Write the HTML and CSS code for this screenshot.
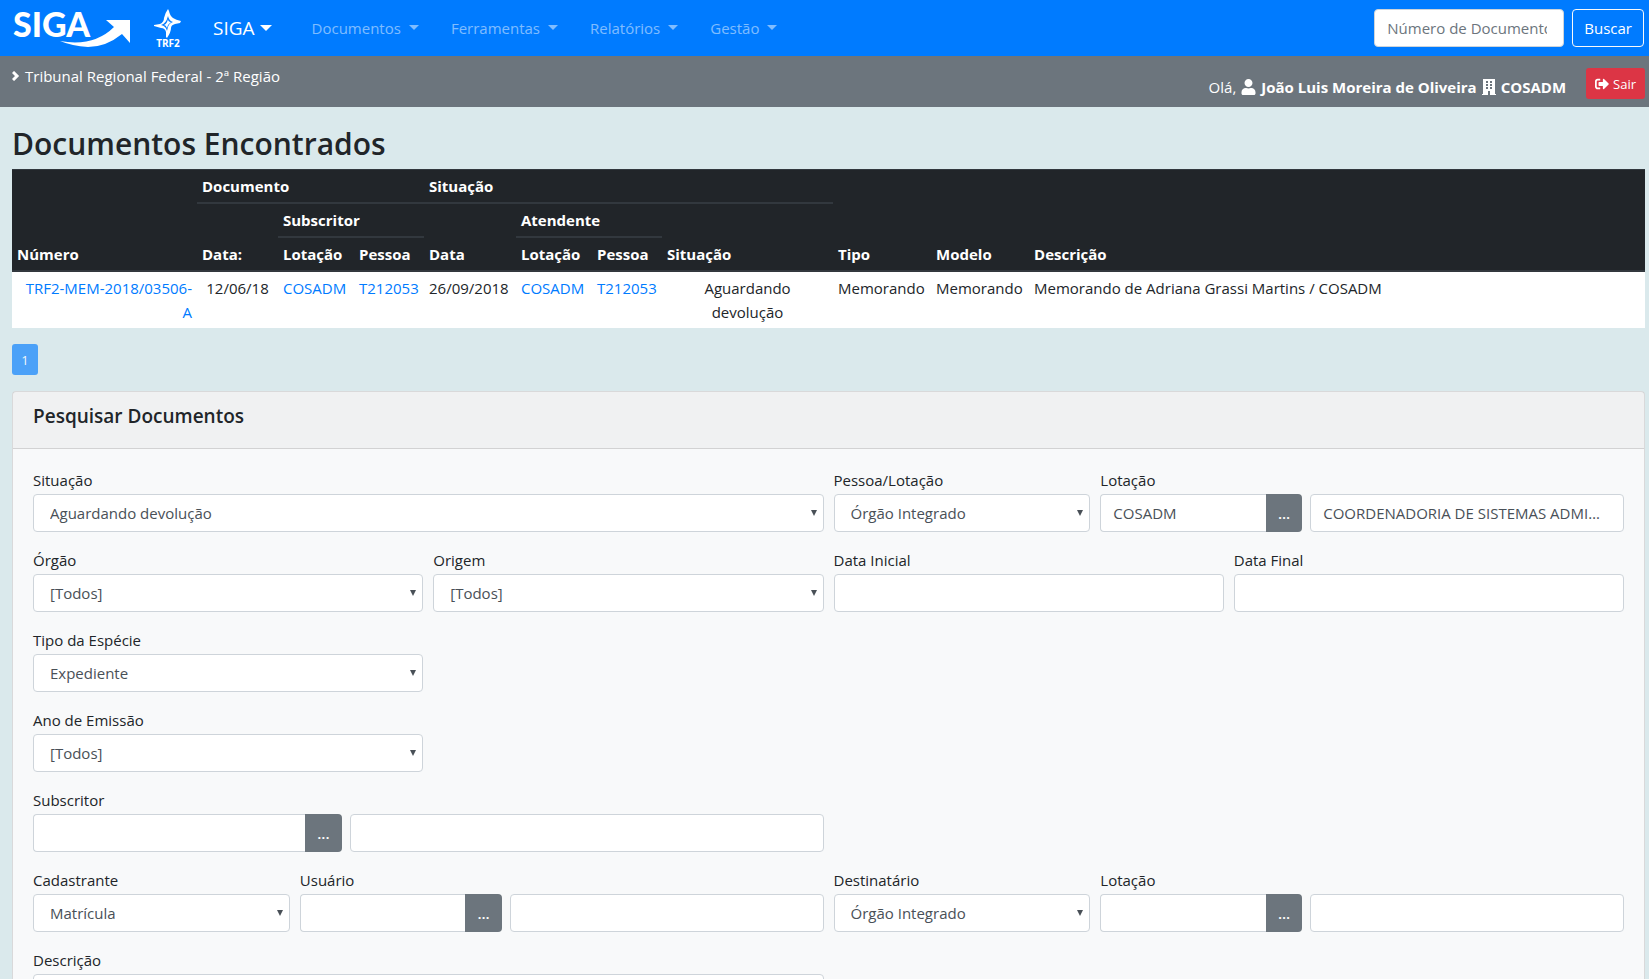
FILE: index.html
```html
<!DOCTYPE html>
<html lang="pt-BR">
<head>
    <meta charset="UTF-8">
    <meta name="viewport" content="width=device-width, initial-scale=1.0">
    <title>SIGA - Lista de Documentos</title>
    <link rel="stylesheet" href="styles.css">
</head>
<body>
    <nav class="navbar">
        <a class="logo" href="#" aria-label="Página inicial">
            <svg width="120" height="56" viewBox="11 0 120 56">
                <text class="logo-text" x="13" y="37">SIGA</text>
                <path fill="#fff" d="M60 41 Q94 47 114 27 L106 20 H130 V43 L122 34 Q106 47 88 47 Q72 46 60 41Z"/>
            </svg>
        </a>
        <a class="logo-trf" href="#" aria-label="TRF2">
            <svg width="30" height="56" viewBox="153 0 30 56">
                <path fill="#fff" d="M168 9 L169 11 Q170 16 173 18 Q176 20 181 21 L180 23 L175 24 Q171 25 171 28 Q171 32 167 38 L166 37 V32 Q165 28 161 28 L154 26 V25 L160 24 Q164 22 164 18 Q165 13 168 9Z"/>
                <path fill="#007bff" d="M168 16 Q169 21 173 22 Q168 23 167 31 Q166 26 161 25 Q166 24 168 16Z"/>
                <path fill="#fff" d="M168 19 Q168 22 171 22 Q168 24 167 28 Q166 25 164 25 Q167 24 168 19Z"/>
                <text class="logo-trf-text" x="168" y="47" text-anchor="middle">TRF2</text>
            </svg>
        </a>
        <a class="brand dropdown" href="#">SIGA</a>
        <ul class="nav">
            <li><a class="dropdown" href="#">Documentos</a></li>
            <li><a class="dropdown" href="#">Ferramentas</a></li>
            <li><a class="dropdown" href="#">Relatórios</a></li>
            <li><a class="dropdown" href="#">Gestão</a></li>
        </ul>
        <form class="search">
            <input class="form-control" type="text" placeholder="Número de Documento" aria-label="Número de Documento">
            <button class="btn btn-outline" type="button">Buscar</button>
        </form>
    </nav>

    <div class="subbar">
        <div class="orgao">
            <svg width="8" height="10" viewBox="0 0 8 10"><path d="M1 1 L5 5 L1 9" fill="none" stroke="#fff" stroke-width="3"/></svg>
            <span>Tribunal Regional Federal - 2ª Região</span>
        </div>
        <div class="usuario">
            <span>Olá,</span>
            <svg width="15" height="16" viewBox="0 0 448 512"><path fill="#fff" d="M224 256c70.700 0 128-57.300 128-128S294.700 0 224 0 96 57.300 96 128s57.300 128 128 128zm89.600 32h-16.700c-22.200 10.200-46.900 16-72.900 16s-50.600-5.800-72.900-16h-16.700C60.200 288 0 348.200 0 422.400V464c0 26.500 21.500 48 48 48h352c26.500 0 48-21.500 48-48v-41.600c0-74.200-60.200-134.400-134.400-134.400z"/></svg>
            <strong>João Luis Moreira de Oliveira</strong>
            <svg width="14" height="16" viewBox="0 0 14 16"><path fill="#fff" fill-rule="evenodd" d="M1 0H13V15H14V16H8V12H6V16H0V15H1ZM4 2V4H6V2ZM8 2V4H10V2ZM4 5V7H6V5ZM8 5V7H10V5ZM4 8V10H6V8ZM8 8V10H10V8Z"/></svg>
            <strong>COSADM</strong>
        </div>
        <button class="btn btn-danger btn-sm" type="button">
            <svg width="14" height="14" viewBox="0 0 512 512"><path fill="#fff" d="M497 273L329 441c-15 15-41 4.500-41-17v-96H152c-13.300 0-24-10.700-24-24v-96c0-13.300 10.700-24 24-24h136V88c0-21.400 25.900-32 41-17l168 168c9.300 9.400 9.300 24.600 0 34zM192 436v-40c0-6.600-5.400-12-12-12H96c-17.700 0-32-14.300-32-32V160c0-17.700 14.300-32 32-32h84c6.600 0 12-5.400 12-12V76c0-6.600-5.400-12-12-12H96c-53 0-96 43-96 96v192c0 53 43 96 96 96h84c6.600 0 12-5.400 12-12z"/></svg>
            Sair
        </button>
    </div>

    <main class="content">
        <h2>Documentos Encontrados</h2>
        <table class="table">
            <colgroup>
                <col class="c-numero">
                <col class="c-data">
                <col class="c-lotacao">
                <col class="c-pessoa">
                <col class="c-data-sit">
                <col class="c-lotacao">
                <col class="c-pessoa">
                <col class="c-situacao">
                <col class="c-tipo">
                <col class="c-tipo">
                <col>
            </colgroup>
            <thead>
                <tr>
                    <th rowspan="3">Número</th>
                    <th colspan="3">Documento</th>
                    <th colspan="4">Situação</th>
                    <th rowspan="3">Tipo</th>
                    <th rowspan="3">Modelo</th>
                    <th rowspan="3">Descrição</th>
                </tr>
                <tr>
                    <th rowspan="2">Data:</th>
                    <th colspan="2">Subscritor</th>
                    <th rowspan="2">Data</th>
                    <th colspan="2">Atendente</th>
                    <th rowspan="2">Situação</th>
                </tr>
                <tr>
                    <th>Lotação</th>
                    <th>Pessoa</th>
                    <th>Lotação</th>
                    <th>Pessoa</th>
                </tr>
            </thead>
            <tbody>
                <tr>
                    <td class="right"><a href="#">TRF2-MEM-2018/03506-A</a></td>
                    <td class="center">12/06/18</td>
                    <td><a href="#">COSADM</a></td>
                    <td><a href="#">T212053</a></td>
                    <td>26/09/2018</td>
                    <td><a href="#">COSADM</a></td>
                    <td><a href="#">T212053</a></td>
                    <td class="center">Aguardando<br>devolução</td>
                    <td>Memorando</td>
                    <td>Memorando</td>
                    <td>Memorando de Adriana Grassi Martins / COSADM</td>
                </tr>
            </tbody>
        </table>

        <button class="btn btn-primary btn-sm" type="button" disabled>1</button>

        <div class="card">
            <div class="card-header"><h5>Pesquisar Documentos</h5></div>
            <form class="card-body">
                <div class="row">
                    <div class="field col-6">
                        <label for="situacao">Situação</label>
                        <div class="select"><select class="form-control" id="situacao"><option>Aguardando devolução</option></select></div>
                    </div>
                    <div class="field col-2">
                        <label for="pessoaLotacao">Pessoa/Lotação</label>
                        <div class="select"><select class="form-control" id="pessoaLotacao"><option>Órgão Integrado</option></select></div>
                    </div>
                    <div class="field col-4">
                        <label for="lotacao">Lotação</label>
                        <div class="lookup">
                            <div class="input-group">
                                <input class="form-control" type="text" id="lotacao" value="COSADM">
                                <button class="btn btn-secondary" type="button">...</button>
                            </div>
                            <input class="form-control" type="text" value="COORDENADORIA DE SISTEMAS ADMINISTRATIVOS" aria-label="Nome da lotação" readonly>
                        </div>
                    </div>
                </div>
                <div class="row">
                    <div class="field col-3">
                        <label for="orgao">Órgão</label>
                        <div class="select"><select class="form-control" id="orgao"><option>[Todos]</option></select></div>
                    </div>
                    <div class="field col-3">
                        <label for="origem">Origem</label>
                        <div class="select"><select class="form-control" id="origem"><option>[Todos]</option></select></div>
                    </div>
                    <div class="field col-3">
                        <label for="dataInicial">Data Inicial</label>
                        <input class="form-control" type="text" id="dataInicial">
                    </div>
                    <div class="field col-3">
                        <label for="dataFinal">Data Final</label>
                        <input class="form-control" type="text" id="dataFinal">
                    </div>
                </div>
                <div class="row">
                    <div class="field col-3">
                        <label for="especie">Tipo da Espécie</label>
                        <div class="select"><select class="form-control" id="especie"><option>Expediente</option></select></div>
                    </div>
                </div>
                <div class="row">
                    <div class="field col-3">
                        <label for="ano">Ano de Emissão</label>
                        <div class="select"><select class="form-control" id="ano"><option>[Todos]</option></select></div>
                    </div>
                </div>
                <div class="row">
                    <div class="field col-6">
                        <label for="subscritor">Subscritor</label>
                        <div class="lookup">
                            <div class="input-group">
                                <input class="form-control" type="text" id="subscritor">
                                <button class="btn btn-secondary" type="button">...</button>
                            </div>
                            <input class="form-control" type="text" aria-label="Nome do subscritor" readonly>
                        </div>
                    </div>
                </div>
                <div class="row">
                    <div class="field col-2">
                        <label for="cadastrante">Cadastrante</label>
                        <div class="select"><select class="form-control" id="cadastrante"><option>Matrícula</option></select></div>
                    </div>
                    <div class="field col-4">
                        <label for="usuario">Usuário</label>
                        <div class="lookup">
                            <div class="input-group">
                                <input class="form-control" type="text" id="usuario">
                                <button class="btn btn-secondary" type="button">...</button>
                            </div>
                            <input class="form-control" type="text" aria-label="Nome do usuário" readonly>
                        </div>
                    </div>
                    <div class="field col-2">
                        <label for="destinatario">Destinatário</label>
                        <div class="select"><select class="form-control" id="destinatario"><option>Órgão Integrado</option></select></div>
                    </div>
                    <div class="field col-4">
                        <label for="lotacaoDest">Lotação</label>
                        <div class="lookup">
                            <div class="input-group">
                                <input class="form-control" type="text" id="lotacaoDest">
                                <button class="btn btn-secondary" type="button">...</button>
                            </div>
                            <input class="form-control" type="text" aria-label="Nome da lotação do destinatário" readonly>
                        </div>
                    </div>
                </div>
                <div class="row">
                    <div class="field col-6">
                        <label for="descricao">Descrição</label>
                        <input class="form-control" type="text" id="descricao">
                    </div>
                </div>
            </form>
        </div>
    </main>
</body>
</html>
```

FILE: styles.css
```css
* {
    box-sizing: border-box;
}
html {
    scrollbar-width: none;
}
body {
    margin: 0;
    background-color: #dae9ec;
    color: #212529;
    font-family: "Open Sans", "Noto Sans", sans-serif;
    font-size: 15px;
    line-height: 24px;
}
a {
    color: #007bff;
    text-decoration: none;
}
svg {
    display: block;
}

/* navbar */
.navbar {
    display: flex;
    align-items: center;
    height: 56px;
    padding: 0 5px 0 11px;
    background-color: #007bff;
}
.logo-text {
    font: 900 34px Lato, sans-serif;
    fill: #fff;
}
.logo-trf {
    margin-left: 22px;
}
.logo-trf-text {
    font: 700 10px "Open Sans", sans-serif;
    fill: #fff;
}
.brand {
    margin-left: 30px;
    color: #fff;
    font-size: 19px;
}
.dropdown::after {
    content: "";
    display: inline-block;
    margin-left: 8px;
    vertical-align: 4px;
    border-top: 5px solid;
    border-left: 5px solid transparent;
    border-right: 5px solid transparent;
}
.brand.dropdown::after {
    margin-left: 5px;
    border-width: 6px 6px 0;
}
.nav {
    display: flex;
    gap: 32px;
    margin: 0 0 0 40px;
    padding: 0;
    list-style: none;
}
.nav a {
    color: rgba(255, 255, 255, .5);
}
.search {
    display: flex;
    gap: 8px;
    margin-left: auto;
}
.search .form-control {
    width: 190px;
}

/* buttons and fields */
.btn {
    height: 38px;
    padding: 0 11px;
    border: 1px solid transparent;
    border-radius: 4px;
    color: #fff;
    font-family: inherit;
    font-size: 15px;
    line-height: 24px;
}
.btn-sm {
    height: 31px;
    padding: 0 8px;
    border-radius: 3px;
    font-size: 13px;
}
.btn-outline {
    border-color: #f8f9fa;
    background-color: transparent;
}
.btn-primary {
    display: block;
    min-width: 26px;
    background-color: #007bff;
    opacity: .65;
}
.btn-secondary {
    background-color: #6c757d;
    font-weight: 600;
}
.btn-danger {
    display: flex;
    align-items: center;
    gap: 4px;
    background-color: #dc3545;
}
.form-control {
    display: block;
    width: 100%;
    height: 38px;
    padding: 0 12px;
    border: 1px solid #ced4da;
    border-radius: 4px;
    background-color: #fff;
    color: #495057;
    font-family: inherit;
    font-size: 15px;
    text-overflow: ellipsis;
}
.form-control::placeholder {
    color: #6c757d;
}
.search .form-control {
    padding-right: 16px;
    text-overflow: clip;
}
.select {
    position: relative;
}
.select select {
    appearance: none;
    padding-left: 16px;
}
.select::after {
    content: "";
    position: absolute;
    top: 16px;
    right: 7px;
    border-top: 6px solid #495057;
    border-left: 3px solid transparent;
    border-right: 3px solid transparent;
    pointer-events: none;
}
.lookup {
    display: flex;
    gap: 8px;
}
.lookup > .form-control {
    flex: 3 1 26px;
    min-width: 0;
}
.input-group {
    display: flex;
    flex: 2 1 10px;
    min-width: 0;
}
.input-group .form-control {
    flex: 1;
    min-width: 0;
    border-right: 0;
    border-radius: 4px 0 0 4px;
}
.input-group .btn {
    border-radius: 0 4px 4px 0;
}

/* gray bar under the menu */
.subbar {
    display: flex;
    align-items: flex-start;
    height: 51px;
    padding: 0 4px 0 12px;
    background-color: #6c757d;
    color: #fff;
}
.orgao {
    display: flex;
    align-items: center;
    gap: 5px;
    padding-top: 8px;
}
.usuario {
    display: flex;
    align-items: center;
    gap: 5px;
    margin-left: auto;
    padding-top: 19px;
}
.subbar .btn {
    margin: 12px 0 0 20px;
}

/* result list */
.content {
    padding: 18px 4px 0 12px;
}
h2 {
    margin: 0 0 6px;
    font-size: 30px;
    font-weight: 600;
    line-height: 38px;
}
.table {
    width: 100%;
    margin-bottom: 16px;
    border-spacing: 0;
    table-layout: fixed;
    background-color: #fff;
}
.table th,
.table td {
    padding: 4px 5px;
    text-align: left;
    vertical-align: top;
}
.table thead {
    background-color: #212529;
    color: #fff;
}
.table th {
    border-bottom: 2px solid #32383e;
    vertical-align: bottom;
}
.table thead tr:first-child th {
    border-top: 1px solid #32383e;
}
.table .center {
    text-align: center;
}
.table .right {
    text-align: right;
}
.c-numero {
    width: 185px;
}
.c-data {
    width: 81px;
}
.c-lotacao {
    width: 76px;
}
.c-pessoa {
    width: 70px;
}
.c-data-sit {
    width: 92px;
}
.c-situacao {
    width: 171px;
}
.c-tipo {
    width: 98px;
}

/* search form */
.card {
    margin-top: 16px;
    border: 1px solid rgba(0, 0, 0, .125);
    border-radius: 4px;
    background-color: #f8f9fa;
}
.card-header {
    padding: 12px 20px;
    border-bottom: 1px solid rgba(0, 0, 0, .125);
    background-color: rgba(0, 0, 0, .03);
}
h5 {
    margin: 0 0 8px;
    font-size: 19px;
    font-weight: 600;
    line-height: 24px;
}
.card-body {
    padding: 19px 20px;
}
.row {
    display: grid;
    grid-template-columns: repeat(12, minmax(0, 1fr));
    gap: 10px;
    margin-bottom: 16px;
}
.field label {
    display: block;
    margin-bottom: 2px;
}
.col-2 {
    grid-column: span 2;
}
.col-3 {
    grid-column: span 3;
}
.col-4 {
    grid-column: span 4;
}
.col-6 {
    grid-column: span 6;
}
```
